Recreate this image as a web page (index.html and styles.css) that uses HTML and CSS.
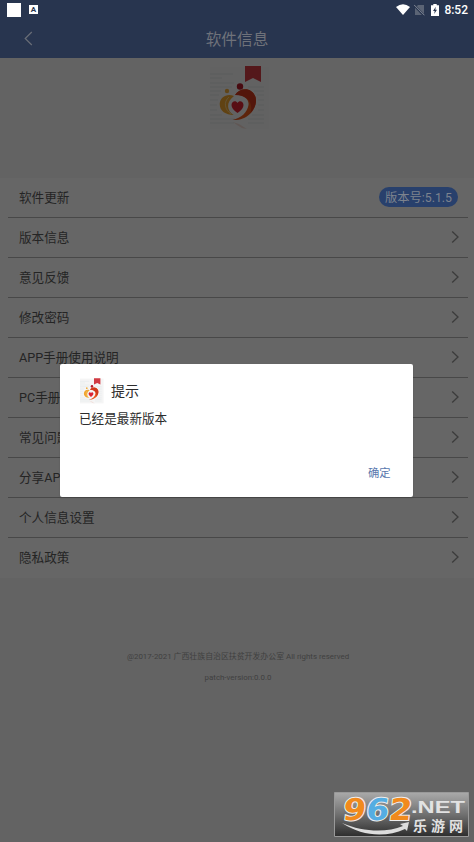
FILE: index.html
```html
<!DOCTYPE html>
<html lang="zh-CN">
<head>
<meta charset="utf-8">
<title>软件信息</title>
<link rel="stylesheet" href="styles.css">
</head>
<body>
<svg width="0" height="0" class="defs">
  <symbol id="appicon" viewBox="0 0 60 64">
    <path d="M0 1h59v62H0z" fill="#f5f5f5"/>
    <path d="M0 8h23M0 12h12M0 17h24M0 21h22M38 21h16M0 25h11M44 25h10M0 29h9M47 29h7M0 34h8M48 34h6M0 39h7M48 39h6M0 44h7M48 44h6M0 49h12M42 49h12M0 53h25M38 53h16M0 57h24M38 57h16" stroke="#dfe5e7" stroke-width="1.1" fill="none"/>
    <path d="M35 0h16v16l-8-4-8 4z" fill="#d13b43"/>
    <circle cx="17" cy="25" r="2.2" fill="#f0ad3e"/>
    <circle cx="30" cy="20.5" r="3.2" fill="#b51a28"/>
    <path d="M24 30C17 27 10 31 9.700 38c0 7 6 11 14 11-7-4-8-13 .3-19z" fill="#f0a52e"/>
    <path d="M19 31c-6 5-4 13 2 17" stroke="#f9d997" stroke-width=".8" fill="none"/>
    <path d="M25 29C30 21 42 21 45.500 31c3 10-7 24-23 23 9-2 15-8 16-15 1-6-6-11-13.500-10z" fill="#e8591c"/>
    <path d="M25 29C30 21 42 21 45.500 31c1.500 6-1 12-5 16 3-10-3-18-15.500-18z" fill="#d0381c"/>
    <path d="M27.500 47c-4-3-6-5-6-8 0-4 4.500-5 6-2 1.500-3 6-2 6 2 0 3-2 5-6 8z" fill="#dc2433"/>
    <path d="M23 56l6 2 8 5-5-1-5-3z" fill="#e59a83" opacity=".3"/>
  </symbol>
  <symbol id="chevron" viewBox="0 0 9 14"><path d="M1.200 1.500 7 7l-5.800 5.500" fill="none" stroke="currentColor" stroke-width="1.300"/></symbol>
</svg>
<div class="screen">
  <header>
    <div class="status">
      <i class="square"></i>
      <i class="keyboard">A</i>
      <svg class="wifi" width="14" height="11" viewBox="0 0 14 11"><path d="M0 3Q7-2.500 14 3L7 11z" fill="#fff"/></svg>
      <svg class="sim" width="11" height="12" viewBox="0 0 11 12"><path d="M4 1h6v10H1V4z" fill="#5b6475"/><path d="M0 1l10 10.500" stroke="#28354f" stroke-width="2.400"/><path d="M0 .8l10.500 10.500" stroke="#858c99" stroke-width="1"/></svg>
      <svg class="battery" width="8" height="12" viewBox="0 0 8 12"><path d="M2.300 0h3.400v1.200H8V12H0V1.200h2.300z" fill="#fff"/><path d="M4.800 2.800 2 7h1.700L3.200 10 6 5.800H4.300z" fill="#28354f"/></svg>
      <span class="clock">8:52</span>
    </div>
    <div class="nav">
      <svg class="back" width="9" height="15" viewBox="0 0 9 15"><path d="M7.800 1 1.200 7.500 7.800 14" fill="none" stroke="#696d76" stroke-width="1.200"/></svg>
      <h1>软件信息</h1>
    </div>
  </header>
  <div class="hero"><svg class="logo" width="60" height="64"><use href="#appicon"/></svg></div>
  <ul>
    <li><span>软件更新</span><b>版本号:5.1.5</b></li>
    <li><span>版本信息</span><svg><use href="#chevron"/></svg></li>
    <li><span>意见反馈</span><svg><use href="#chevron"/></svg></li>
    <li><span>修改密码</span><svg><use href="#chevron"/></svg></li>
    <li><span>APP手册使用说明</span><svg><use href="#chevron"/></svg></li>
    <li><span>PC手册使用说明</span><svg><use href="#chevron"/></svg></li>
    <li><span>常见问题</span><svg><use href="#chevron"/></svg></li>
    <li><span>分享APP</span><svg><use href="#chevron"/></svg></li>
    <li><span>个人信息设置</span><svg><use href="#chevron"/></svg></li>
    <li><span>隐私政策</span><svg><use href="#chevron"/></svg></li>
  </ul>
  <footer>
    <p>@2017-2021 广西壮族自治区扶贫开发办公室 All rights reserved</p>
    <p>patch-version:0.0.0</p>
  </footer>
  <div class="dialog">
    <div class="title"><svg width="24" height="26"><use href="#appicon"/></svg><h2>提示</h2></div>
    <p>已经是最新版本</p>
    <a>确定</a>
  </div>
  <svg class="watermark" width="136" height="46" viewBox="0 0 136 46">
    <defs><linearGradient id="g" x2="0" y2="1"><stop stop-color="#aaa"/><stop offset=".5" stop-color="#707070"/><stop offset="1" stop-color="#2d2d2d"/></linearGradient></defs>
    <path d="M.5.500h134v44H.5z" fill="url(#g)" stroke="#999"/>
    <g class="digits" transform="translate(8 27.500) skewX(-7)">
      <text x="0" y="0" textLength="23" lengthAdjust="spacingAndGlyphs" fill="#f18a1d">9</text>
      <text x="23" y="0" textLength="23" lengthAdjust="spacingAndGlyphs" fill="#55ade2">6</text>
      <text x="46" y="0" textLength="23" lengthAdjust="spacingAndGlyphs" fill="#f18a1d">2</text>
    </g>
    <text class="net" x="77" y="21" textLength="54" lengthAdjust="spacingAndGlyphs">.NET</text>
    <text class="site" x="79" y="39" textLength="50">乐游网</text>
    <path d="M8 31c21 9 44 10 61 3l-3-2 9-2-2 9-2-2c-20 9-43 7-63-6z" fill="#ddd"/>
  </svg>
</div>
</body>
</html>
```
FILE: styles.css
```css
* { box-sizing: border-box; margin: 0; padding: 0; }
body { width: 474px; height: 842px; overflow: hidden; font-family: Roboto, "Noto Sans CJK SC", sans-serif; }
.defs { position: absolute; }
.screen { position: relative; width: 474px; height: 842px; background: #636363; }
header { height: 58px; background: #28354f; }
.status { display: flex; align-items: center; height: 19px; padding: 0 6px 0 7px; }
.square { width: 14px; height: 14px; background: #fff; }
.keyboard { width: 9px; height: 9px; margin-left: 8px; background: #fff; color: #28354f; font: bold 8px/9px Roboto, sans-serif; text-align: center; }
.wifi { margin-left: auto; }
.sim { margin-left: 4px; }
.battery { margin-left: 6px; }
.clock { margin-left: 5px; color: #fff; font-size: 12px; font-weight: 500; line-height: 20px; padding-top: 1px; }
.nav { display: flex; align-items: center; height: 39px; padding-left: 24px; }
.nav h1 { flex: 1; margin-right: 33px; text-align: center; font-size: 15.7px; font-weight: 400; color: #6f727a; }
.hero { display: flex; justify-content: center; height: 120px; padding: 8px 0 0 6px; background: #636363; }
.logo { filter: brightness(.4); }
ul { list-style: none; height: 400px; background: #666; }
li { display: flex; align-items: center; justify-content: space-between; height: 40px; margin: 0 6px 0 8px; padding: 0 8px 1px 11px; border-bottom: 1px solid #484848; color: #242424; font-size: 12.6px; }
li:last-child { border-bottom-color: transparent; }
li span { margin-top: -1px; }
li svg { width: 9px; height: 14px; color: #3c3c3c; }
li b { height: 20px; margin-right: 2px; padding: 0 6px; border-radius: 10px; background: #28406c; color: #7d838e; font-weight: 400; line-height: 22px; font-size: 12.3px; }
footer { padding-top: 72px; padding-left: 2px; text-align: center; color: #404040; font-size: 7.9px; line-height: 14px; }
footer p + p { margin-top: 7px; }
.dialog { position: absolute; left: 60px; top: 364px; width: 353px; height: 133px; padding: 14px 20px; border-radius: 2px; background: #fff; color: #2c2c2c; box-shadow: 0 1px 2px #4446; }
.title { display: flex; align-items: center; height: 26px; }
.title h2 { margin: 0 0 2px 7px; font-size: 14px; font-weight: 400; }
.dialog p { margin: 5px 0 0 -1px; font-size: 12.6px; line-height: 20px; }
.dialog a { display: block; width: 24px; margin: 36px 1px 0 auto; color: #5877ae; font-size: 11.3px; line-height: 18px; }
.watermark { position: absolute; left: 334px; top: 792px; }
.digits { font: bold 30px "DejaVu Sans", sans-serif; stroke: #eee; stroke-width: 2px; paint-order: stroke; }
.net { font: bold 17px "Liberation Sans", sans-serif; fill: #e2e2e2; }
.site { font: bold 14px "Noto Sans CJK SC", sans-serif; fill: #e2e2e2; }
```
